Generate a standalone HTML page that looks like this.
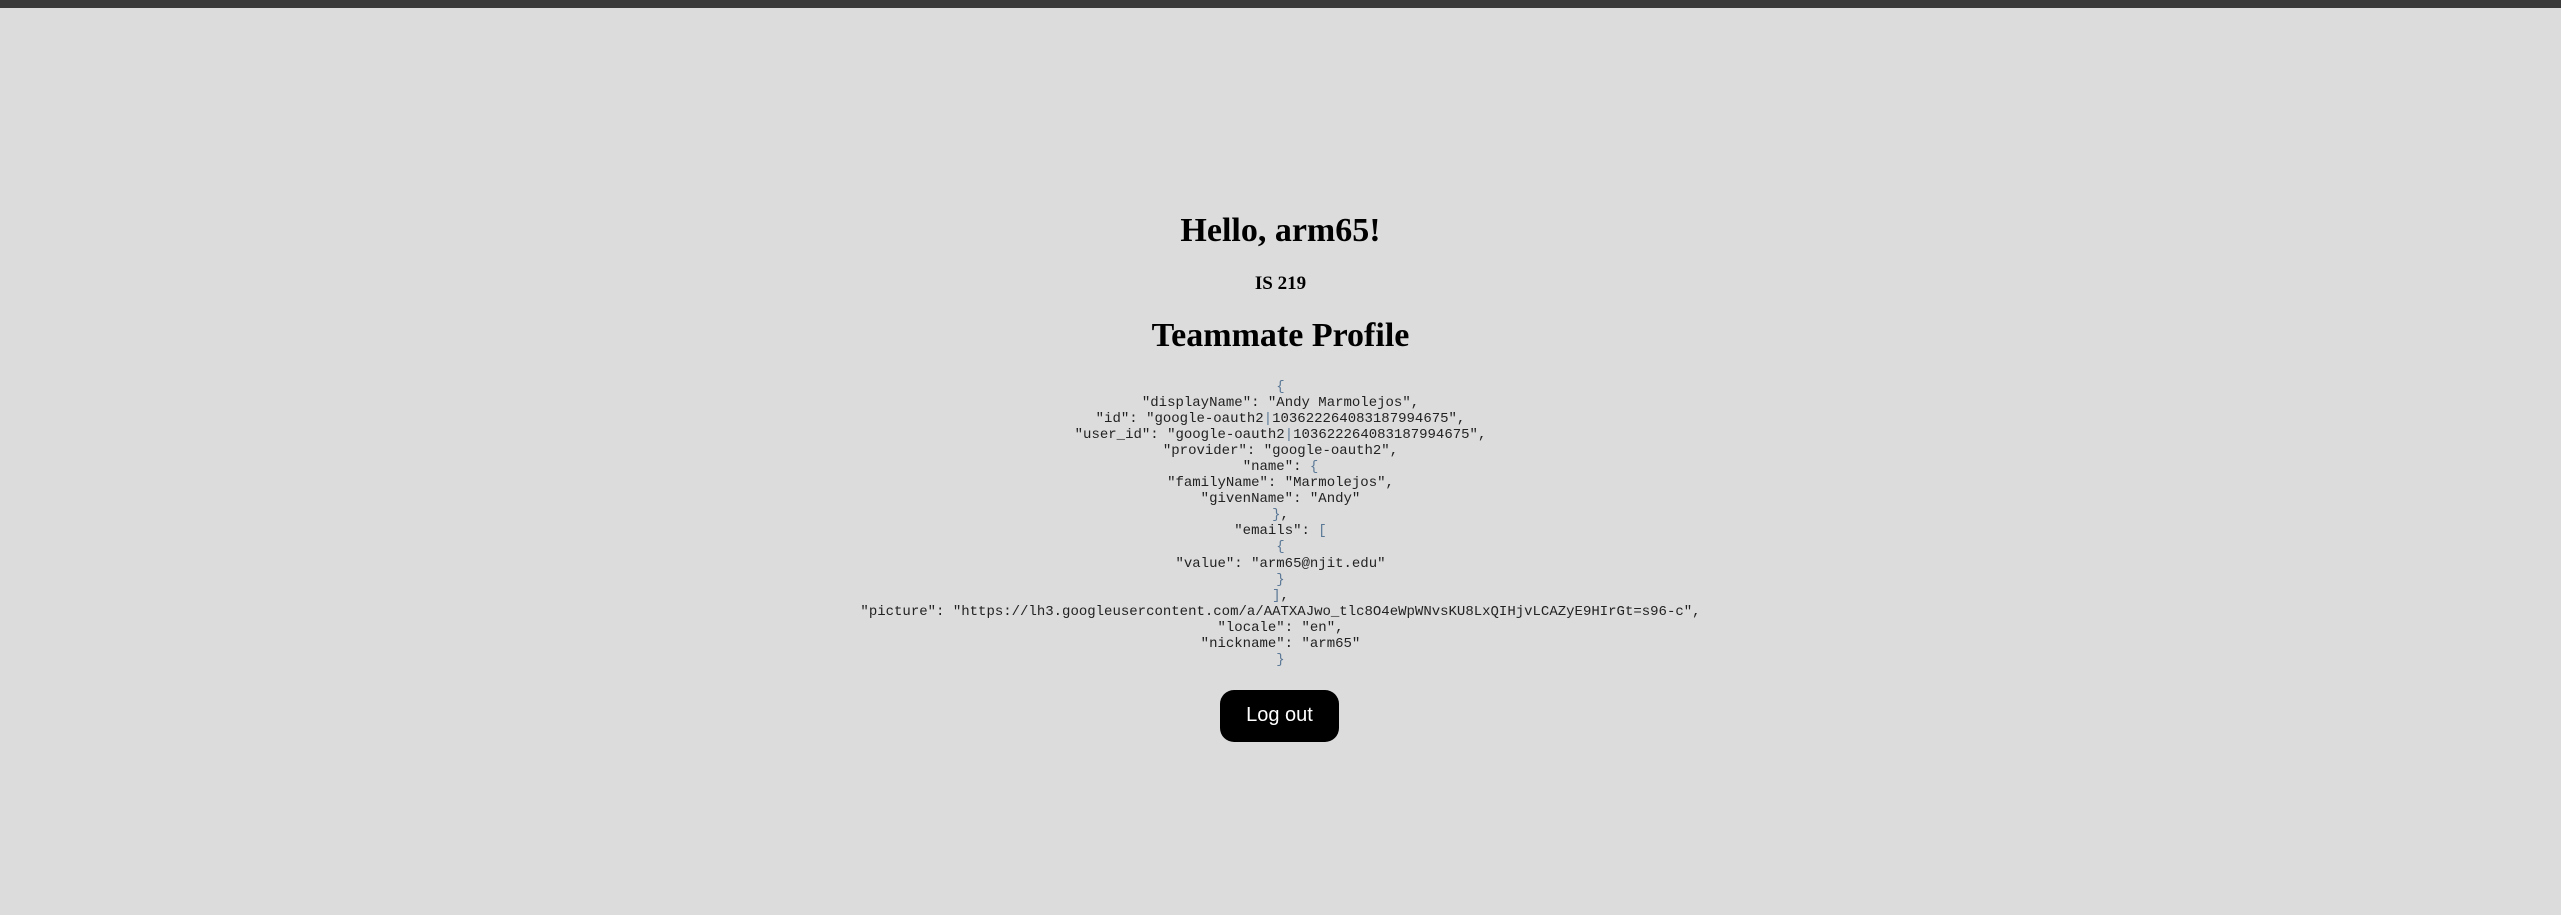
<!DOCTYPE html>
<html><head><meta charset="utf-8"><style>
html,body{margin:0;padding:0;width:2561px;height:915px;background:#dcdcdc;overflow:hidden;position:relative}
.bar{position:absolute;left:0;top:0;width:2561px;height:8px;background:#3a3a3a}
.t{position:absolute;left:0;width:2561px;text-align:center;font-family:"Liberation Serif",serif;font-weight:bold;color:#000;line-height:1;white-space:nowrap}
pre{position:absolute;left:0;top:379px;width:2561px;margin:0;text-align:center;font-family:"Liberation Mono",monospace;font-size:14px;line-height:16.05px;color:#222}
.b{color:#5a7896}
.btn{position:absolute;left:1220px;top:690px;width:119px;height:52px;background:#000;border-radius:14px;color:#fff;font-family:"Liberation Sans",sans-serif;font-size:20px;line-height:50px;text-align:center}
</style></head><body>
<div class="bar"></div>
<div class="t" style="top:214px;font-size:34px">Hello, arm65!</div>
<div class="t" style="top:274px;font-size:19px">IS 219</div>
<div class="t" style="top:319px;font-size:34px">Teammate Profile</div>
<pre><span class="b">{</span>
"displayName": "Andy Marmolejos",
"id": "google-oauth2<span class="b">|</span>103622264083187994675",
"user_id": "google-oauth2<span class="b">|</span>103622264083187994675",
"provider": "google-oauth2",
"name": <span class="b">{</span>
"familyName": "Marmolejos",
"givenName": "Andy"
<span class="b">}</span>,
"emails": <span class="b">[</span>
<span class="b">{</span>
"value": "arm65@njit.edu"
<span class="b">}</span>
<span class="b">]</span>,
"picture": "https://lh3.googleusercontent.com/a/AATXAJwo_tlc8O4eWpWNvsKU8LxQIHjvLCAZyE9HIrGt=s96-c",
"locale": "en",
"nickname": "arm65"
<span class="b">}</span></pre>
<div class="btn">Log out</div>
</body></html>
